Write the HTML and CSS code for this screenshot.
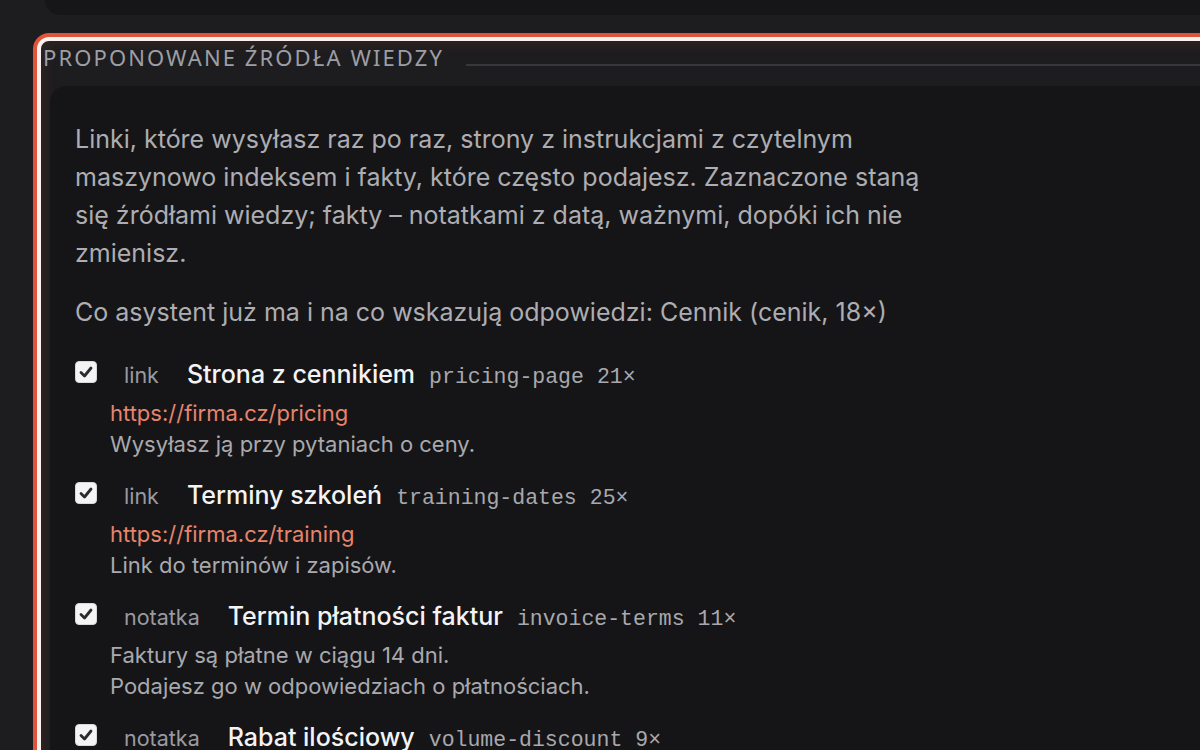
FILE: index.html
```html
<!DOCTYPE html>
<html lang="pl">
<head>
<meta charset="utf-8">
<title>Proponowane źródła wiedzy</title>
<link rel="stylesheet" href="styles.css">
</head>
<body>
<div class="page">
  <div class="topcard"></div>
  <section class="panel">
    <div class="panel-head">
      <h2 class="panel-title">PROPONOWANE ŹRÓDŁA WIEDZY</h2>
      <div class="rule"></div>
    </div>
    <div class="panel-body">
      <p class="intro">Linki, które wysyłasz raz po raz, strony z instrukcjami z czytelnym maszynowo indeksem i fakty, które często podajesz. Zaznaczone staną się źródłami wiedzy; fakty – notatkami z datą, ważnymi, dopóki ich nie zmienisz.</p>
      <p class="intro">Co asystent już ma i na co wskazują odpowiedzi: Cennik (cenik, 18×)</p>
      <ul class="items">
        <li class="item">
          <div class="item-row">
            <span class="check"><svg viewBox="0 0 20 20" width="20" height="20"><path d="M5 10.5 L8.5 14 L15 6" fill="none" stroke="#2b2b2e" stroke-width="2.8" stroke-linecap="round" stroke-linejoin="round"/></svg></span>
            <span class="kind">link</span>
            <span class="title">Strona z cennikiem</span>
            <code class="key">pricing-page</code>
            <span class="count">21×</span>
          </div>
          <div class="item-sub">
            <div class="url">https://firma.cz/pricing</div>
            <div class="desc">Wysyłasz ją przy pytaniach o ceny.</div>
          </div>
        </li>
        <li class="item">
          <div class="item-row">
            <span class="check"><svg viewBox="0 0 20 20" width="20" height="20"><path d="M5 10.5 L8.5 14 L15 6" fill="none" stroke="#2b2b2e" stroke-width="2.8" stroke-linecap="round" stroke-linejoin="round"/></svg></span>
            <span class="kind">link</span>
            <span class="title">Terminy szkoleń</span>
            <code class="key">training-dates</code>
            <span class="count">25×</span>
          </div>
          <div class="item-sub">
            <div class="url">https://firma.cz/training</div>
            <div class="desc">Link do terminów i zapisów.</div>
          </div>
        </li>
        <li class="item">
          <div class="item-row">
            <span class="check"><svg viewBox="0 0 20 20" width="20" height="20"><path d="M5 10.5 L8.5 14 L15 6" fill="none" stroke="#2b2b2e" stroke-width="2.8" stroke-linecap="round" stroke-linejoin="round"/></svg></span>
            <span class="kind">notatka</span>
            <span class="title">Termin płatności faktur</span>
            <code class="key">invoice-terms</code>
            <span class="count">11×</span>
          </div>
          <div class="item-sub">
            <div class="desc">Faktury są płatne w ciągu 14 dni.</div>
            <div class="desc">Podajesz go w odpowiedziach o płatnościach.</div>
          </div>
        </li>
        <li class="item">
          <div class="item-row">
            <span class="check"><svg viewBox="0 0 20 20" width="20" height="20"><path d="M5 10.5 L8.5 14 L15 6" fill="none" stroke="#2b2b2e" stroke-width="2.8" stroke-linecap="round" stroke-linejoin="round"/></svg></span>
            <span class="kind">notatka</span>
            <span class="title">Rabat ilościowy</span>
            <code class="key">volume-discount</code>
            <span class="count">9×</span>
          </div>
        </li>
      </ul>
    </div>
  </section>
</div>
</body>
</html>
```
FILE: styles.css
```css
html, body {
  margin: 0;
  padding: 0;
}
body {
  background: #1d1d20;
  overflow: hidden;
  height: 750px;
  font-family: Inter, "Noto Sans", sans-serif;
  color: #adadb2;
}
.page {
  display: flex;
  flex-direction: column;
}
.topcard {
  height: 15px;
  margin-left: 45px;
  margin-right: -40px;
  background: #161618;
  border-radius: 0 0 0 16px;
}
.panel {
  margin: 22px -40px 0 37px;
  border: 4px solid #fbf1ee;
  border-radius: 12px;
  box-shadow: 0 0 0 4px #e2543a, inset 0 0 16px rgba(226, 84, 58, 0.16);
  background: #1d1d20;
}
.panel-head {
  display: flex;
  align-items: flex-start;
  height: 45px;
  box-sizing: border-box;
  padding: 5px 0 0 2px;
}
.panel-title {
  margin: 0;
  font-family: "Noto Sans", "Open Sans", sans-serif;
  font-weight: 400;
  font-size: 22px;
  line-height: 22px;
  letter-spacing: 2.1px;
  color: #9e9ea5;
  white-space: nowrap;
}
.rule {
  flex: 1;
  height: 2px;
  margin: 18px 0 0 22px;
  background: #38383c;
}
.panel-body {
  margin-left: 9px;
  background: #151517;
  border-radius: 16px 0 0 0;
  padding: 34px 25px 40px 25px;
  min-height: 700px;
}
.intro {
  margin: 0 0 21px;
  max-width: 860px;
  font-size: 25px;
  line-height: 38px;
  color: #adadb2;
}
.items {
  list-style: none;
  margin: 24px 0 0;
  padding: 0;
  display: flex;
  flex-direction: column;
  gap: 16px;
}
.item-row {
  display: flex;
  align-items: baseline;
  height: 38px;
  line-height: 38px;
}
.check {
  align-self: center;
  display: inline-flex;
  width: 20px;
  height: 20px;
  margin: -4px 0 0 0;
  border: 1px solid #d8d8dc;
  background: #f4f4f5;
  border-radius: 4px;
}
.kind {
  margin-left: 27px;
  font-size: 21.5px;
  color: #9a9aa0;
}
.title {
  margin-left: 28px;
  font-size: 25px;
  font-weight: 500;
  color: #f3f3f4;
}
.key {
  margin-left: 14px;
  font-family: "Liberation Mono", monospace;
  font-size: 21.5px;
  color: #a8a8ad;
}
.count {
  margin-left: 13px;
  font-family: "Liberation Mono", monospace;
  font-size: 21.5px;
  color: #a8a8ad;
}
.item-sub {
  padding: 5px 0 0 35px;
  font-size: 22px;
  line-height: 31px;
}
.url {
  color: #e8846c;
}
.desc {
  color: #a9a9ae;
}
```
